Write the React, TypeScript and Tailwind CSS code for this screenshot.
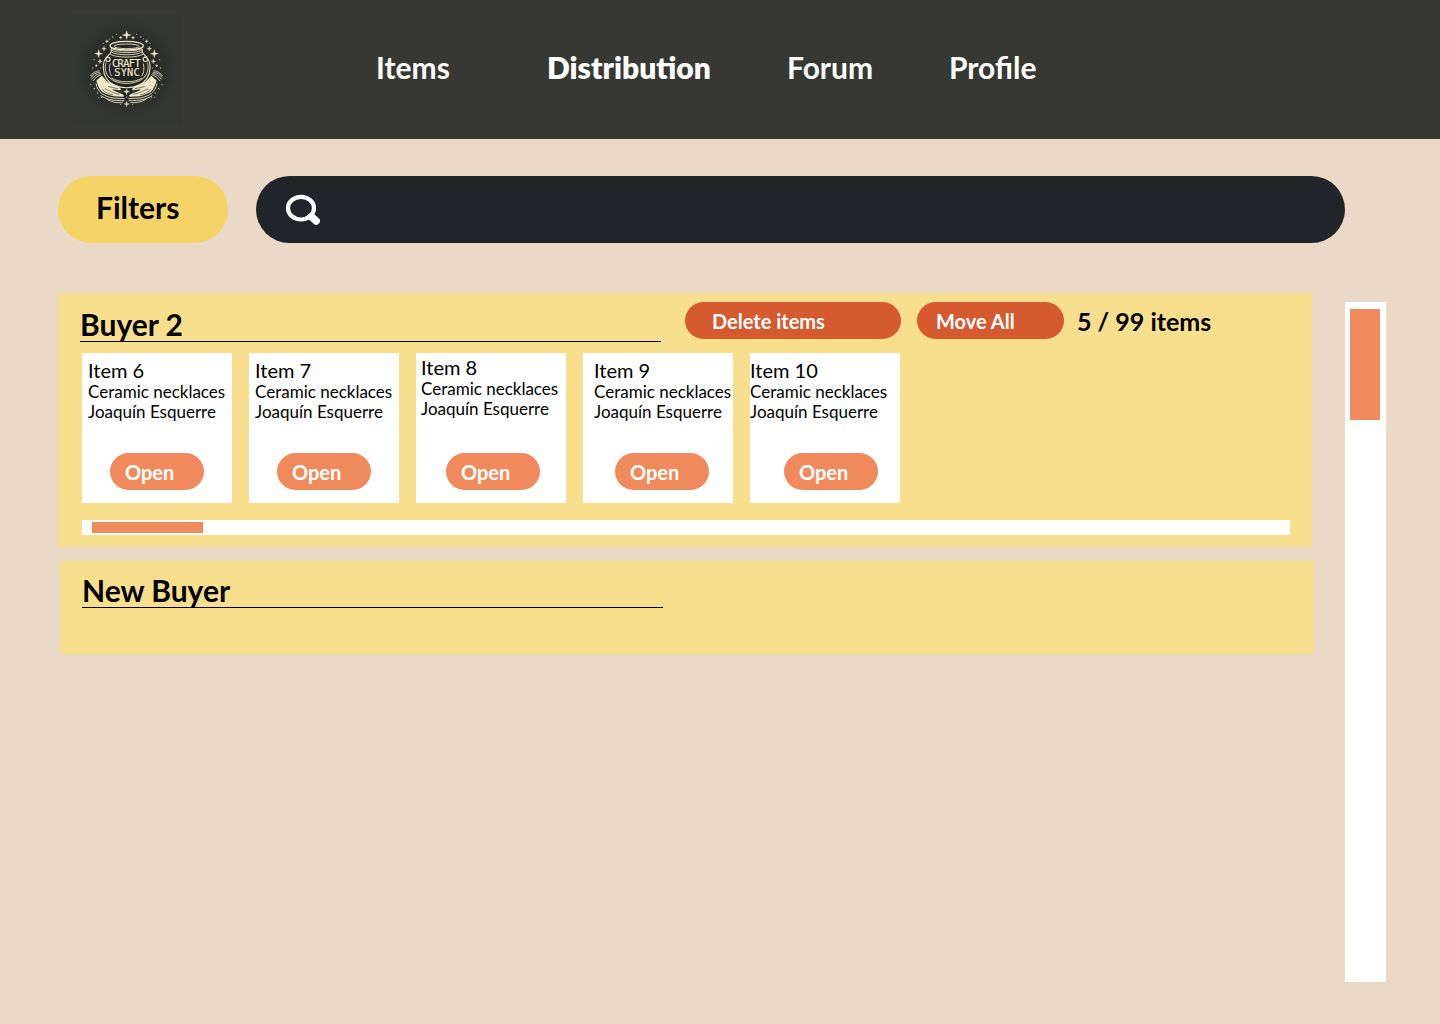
import React from "react";

const INK = "#efe6c9";

type Star = [number, number, number];

const sparkles: Star[] = [
  [182, 75, 13],
  [98, 131, 12],
  [265, 131, 12],
  [182, 245, 9],
  [182, 282, 8],
  [114, 116, 7],
  [250, 116, 7],
  [102, 154, 7],
  [262, 154, 7],
  [164, 83, 5],
  [201, 83, 5],
  [123, 94, 5],
  [242, 94, 5],
  [91, 167, 4],
  [272, 167, 4],
];

const dots: Star[] = [
  [152, 73, 1.8], [212, 73, 1.8], [140, 81, 2.2], [224, 81, 2.2], [131, 87, 1.6],
  [232, 87, 1.6], [112, 100, 2], [252, 100, 2], [84, 149, 2], [281, 149, 2],
  [80, 174, 2], [284, 174, 2], [104, 174, 1.8], [259, 174, 1.8], [74, 224, 2],
  [288, 224, 2], [85, 236, 2.4], [278, 236, 2.4], [95, 249, 2.4], [268, 249, 2.4],
  [107, 262, 2.2], [256, 262, 2.2], [99, 262, 1.5], [265, 262, 1.5], [164, 283, 1.8],
  [200, 283, 1.8], [182, 262, 2.2],
];

function sparklePath([x, y, r]: Star) {
  const k = r * 0.22;
  return `M${x} ${y - r}L${x + k} ${y - k}L${x + r} ${y}L${x + k} ${y + k}L${x} ${y + r}L${x - k} ${y + k}L${x - r} ${y}L${x - k} ${y - k}Z`;
}

function Hand() {
  return (
    <g>
      <path
        d="M91 212L107 197C116 205 122 215 134 220C146 223 158 228 164 236C166 240 161 242 156 240L137 238C146 245 160 248 172 254C176 258 172 261 167 260L143 259C124 254 108 248 101 236C95 227 94 219 91 212Z"
        fill={INK}
      />
      <path d="M74 198C78 190 87 184 100 182M75 203C80 194 90 188 102 186M77 208C83 199 94 192 104 190M81 213C87 204 96 197 106 194" stroke={INK} strokeWidth="2.4" fill="none" />
      <path d="M90 220C93 246 116 260 141 264L176 266M104 256C120 268 140 272 175 272M123 268C137 276 150 279 170 278" stroke={INK} strokeWidth="2.6" fill="none" />
      <path d="M116 236C128 240 140 250 161 253M126 230C138 231 146 235 157 236M108 238C118 248 130 253 141 255" stroke="#292b27" strokeWidth="1.8" fill="none" />
    </g>
  );
}

function Logo() {
  return (
    <svg viewBox="0 0 360 360" className="ml-[66px] mt-[10px] block h-[120px] w-[120px] shrink-0" aria-label="Craft Sync">
      <defs>
        <radialGradient id="glow">
          <stop offset="0" stopColor="#20221f" />
          <stop offset="0.6" stopColor="#292b27" />
          <stop offset="1" stopColor="#343631" />
        </radialGradient>
      </defs>
      <rect x="20" y="14" width="328" height="330" fill="#343631" />
      <circle cx="182" cy="178" r="150" fill="url(#glow)" />
      <g fill="none" stroke={INK} strokeWidth="2.6">
        <ellipse cx="182" cy="107" rx="50" ry="13" strokeWidth="4" />
        <ellipse cx="182" cy="109" rx="38" ry="7" />
        <path d="M133 112C140 126 224 126 231 112M135 119C148 131 216 131 229 119M136 126C151 137 213 137 228 126M133 133C151 144 213 144 231 133" />
        <path d="M135 117C140 129 128 133 120 144C108 160 110 187 121 205C133 223 154 233 182 233C210 233 231 223 243 205C254 187 256 160 244 144C236 133 224 129 229 117" strokeWidth="3.2" />
        <path d="M120 158C115 172 118 190 130 203M244 158C249 172 246 190 234 203M133 160C128 172 130 188 137 198M231 160C236 172 234 188 227 198" />
        <path d="M128 200C148 227 216 227 236 200M136 204C156 219 208 219 228 204" />
        <circle cx="126" cy="148" r="6.5" strokeWidth="3.4" />
        <circle cx="238" cy="148" r="6.5" strokeWidth="3.4" />
      </g>
      <g fontFamily="'DejaVu Sans Mono', monospace" fill={INK} stroke={INK} strokeWidth="0.5">
        <text x="138" y="170" fontSize="31" textLength="86" lengthAdjust="spacing">CRAFT</text>
        <text x="145" y="199" fontSize="31" textLength="76" lengthAdjust="spacing">SYNC</text>
      </g>
      <Hand />
      <g transform="translate(363 0) scale(-1 1)">
        <Hand />
      </g>
      {sparkles.map((s) => (
        <path key={`${s[0]}-${s[1]}`} d={sparklePath(s)} fill={INK} stroke={INK} strokeWidth="1" />
      ))}
      {dots.map(([x, y, r]) => (
        <circle key={`${x}-${y}`} cx={x} cy={y} r={r} fill={INK} opacity="0.75" />
      ))}
    </svg>
  );
}

function SearchIcon() {
  return (
    <svg viewBox="0 0 36 32" className="ml-[29px] h-8 w-9" fill="none" stroke="#fff">
      <ellipse cx="16" cy="14.2" rx="13" ry="11.3" strokeWidth="4.2" />
      <path d="M26.5 22.8L31.2 27.1" strokeWidth="7.4" strokeLinecap="round" />
      <path d="M24 20L28 24" strokeWidth="5" />
    </svg>
  );
}

const items = [
  { name: "Item 6", text: "pl-[6px] pt-[5px]", button: "ml-[28px]" },
  { name: "Item 7", text: "pl-[6px] pt-[5px]", button: "ml-[28px]" },
  { name: "Item 8", text: "pl-[5px] pt-[2px]", button: "ml-[30px]" },
  { name: "Item 9", text: "pl-[11px] pt-[5px]", button: "ml-[32px]" },
  { name: "Item 10", text: "pl-0 pt-[5px]", button: "ml-[34px]" },
];

function ItemCard({ name, text, button }: (typeof items)[number]) {
  return (
    <article className="flex h-[150px] w-[150px] shrink-0 flex-col bg-white">
      <div className={`h-[100px] whitespace-nowrap ${text}`}>
        <h3 className="text-[20px] leading-6">{name}</h3>
        <p className="text-[17px] leading-5">Ceramic necklaces</p>
        <p className="text-[17px] leading-5">Joaquín Esquerre</p>
      </div>
      <button className={`flex h-[37px] w-[94px] items-start rounded-full bg-[#f08a5d] pl-[15px] pt-[7px] text-left text-[20px] font-bold leading-6 text-white ${button}`}>
        Open
      </button>
    </article>
  );
}

export default function App() {
  return (
    <div className="flex h-[1024px] w-[1440px] flex-col overflow-hidden bg-[#ead9c7] text-black" style={{ fontFamily: "Lato, sans-serif" }}>
      <header className="flex h-[139px] shrink-0 items-start bg-[#373833]">
        <Logo />
        <nav className="ml-[190px] mt-[49px] flex text-[30px] font-bold leading-9 text-white">
          <a className="w-[171px]">Items</a>
          <a className="w-[240px] font-extrabold">Distribution</a>
          <a className="w-[162px]">Forum</a>
          <a>Profile</a>
        </nav>
      </header>

      <div className="ml-[58px] mt-[37px] flex h-[67px] shrink-0 gap-7">
        <button className="flex w-[170px] items-start rounded-full bg-[#f5d366] pl-[38px] pt-[13px] text-[30px] font-bold leading-9">Filters</button>
        <div className="flex w-[1089px] rounded-full bg-[#212429] pt-[18px]">
          <SearchIcon />
        </div>
      </div>

      <main className="ml-[58px] mt-[50px] flex">
        <div className="flex w-[1287px] flex-col">
          <section className="h-[254px] w-[1254px] bg-[#f8df8d]">
            <div className="ml-[22px] flex h-[60px] items-start">
              <h2 className="mr-6 mt-[13px] h-[36px] w-[581px] border-b border-black text-[30px] font-bold leading-9">Buyer 2</h2>
              <button className="mr-4 mt-[9px] flex h-[37px] w-[216px] items-start rounded-full bg-[#d55a30] pl-[27px] pt-[7px] text-[20px] font-bold leading-6 text-white">Delete items</button>
              <button className="mr-[13px] mt-[9px] flex h-[37px] w-[147px] items-start rounded-full bg-[#d55a30] pl-[19px] pt-[7px] text-[20px] font-bold leading-6 text-white">Move All</button>
              <span className="mt-[13px] text-[25px] font-bold leading-[30px]">5 / 99 items</span>
            </div>
            <div className="ml-[24px] flex gap-[17px]">
              {items.map((item) => (
                <ItemCard key={item.name} {...item} />
              ))}
            </div>
            <div className="ml-[24px] mt-[17px] flex h-[15px] w-[1208px] items-start bg-white pl-[10px] pt-[2px]">
              <div className="h-[11px] w-[111px] bg-[#f08a5d]" />
            </div>
          </section>
          <section className="ml-[2px] mt-[14px] h-[93px] w-[1254px] bg-[#f8df8d] pl-[22px] pt-[11px]">
            <h2 className="h-[36px] w-[581px] border-b border-black text-[30px] font-bold leading-9">New Buyer</h2>
          </section>
        </div>
        <div className="mt-[9px] h-[680px] w-[41px] bg-white pl-[5px] pt-[7px]">
          <div className="h-[111px] w-[30px] bg-[#f08a5d]" />
        </div>
      </main>
    </div>
  );
}
